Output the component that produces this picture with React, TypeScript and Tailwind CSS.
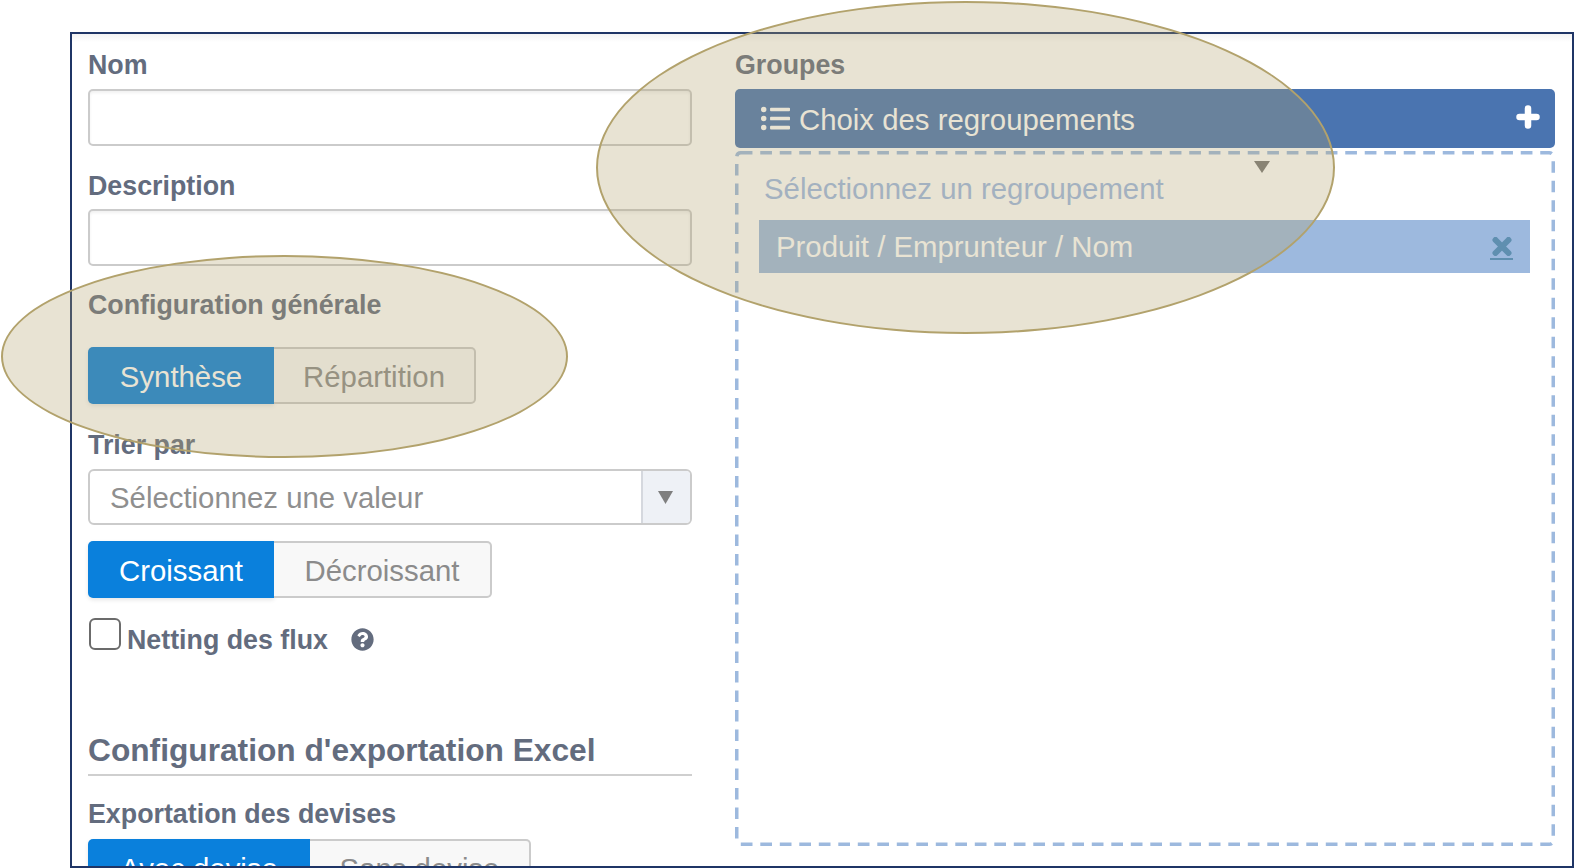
import React from 'react';
import { FaListUl, FaQuestionCircle } from 'react-icons/fa';

const FONT = "font-['Liberation_Sans',Arial,sans-serif]";

const Label: React.FC<{ className?: string; children: React.ReactNode }> = ({ className = '', children }) => (
  <div className={`h-[30px] text-[26.8px] leading-[32px] font-bold text-[#636c7e] ${className}`}>{children}</div>
);

const TextInput: React.FC<{ className?: string }> = ({ className = '' }) => (
  <div className={`h-[57px] w-full rounded-[5px] border-2 border-[#cbcbcb] bg-white shadow-[inset_0_2px_3px_rgba(0,0,0,0.06)] ${className}`} />
);

const Toggle: React.FC<{ left: string; right: string; leftW: string; rightW: string; className?: string }> = ({
  left,
  right,
  leftW,
  rightW,
  className = '',
}) => (
  <div className={`flex h-[57px] text-[29.35px] leading-[59px] ${className}`}>
    <div className={`${leftW} rounded-l-[5px] bg-[#0a80dc] text-center text-white shadow-[0_2px_4px_rgba(0,0,0,0.1)]`}>{left}</div>
    <div className={`${rightW} rounded-r-[5px] border-2 border-l-0 border-[#cbcbcb] bg-[#f8f8f8] text-center leading-[55px] text-[#8b8b8b]`}>
      {right}
    </div>
  </div>
);

export default function App() {
  return (
    <div className={`relative h-[868px] w-[1575px] overflow-hidden bg-white pt-[32px] pl-[70px] pr-[1px] ${FONT}`}>
      {/* Frame */}
      <div className="h-[836px] overflow-hidden border-2 border-[#1f3566]">
        <div className="h-[8px] bg-gradient-to-b from-[#f3f3f3] to-white" />
        <div className="flex gap-[43px] pt-[7px] pl-[16px] pr-[17px]">
          {/* Left column */}
          <div className="w-[604px] shrink-0">
            <Label>Nom</Label>
            <TextInput className="mt-[10px]" />
            <Label className="mt-[24px]">Description</Label>
            <TextInput className="mt-[9px]" />
            <Label className="mt-[23px]">Configuration générale</Label>
            <Toggle className="mt-[28px]" left="Synthèse" right="Répartition" leftW="w-[186px]" rightW="w-[202px]" />
            <Label className="mt-[25px]">Trier par</Label>

            <div className="mt-[10px] flex h-[56px] overflow-hidden rounded-[6px] border-2 border-[#cbcbcb] bg-white">
              <div className="flex-1 pl-[20px] text-[29.35px] leading-[54px] text-[#8f8f8f]">Sélectionnez une valeur</div>
              <div className="flex w-[49px] items-center justify-center border-l-2 border-[#d5d8de] bg-[#eef1f6] pr-[3px]">
                <svg width="15" height="13" viewBox="0 0 15 13">
                  <path d="M0 0h15L7.5 13z" fill="#7f7f7f" />
                </svg>
              </div>
            </div>

            <Toggle className="mt-[16px]" left="Croissant" right="Décroissant" leftW="w-[186px]" rightW="w-[218px]" />

            <div className="mt-[20px] flex h-[31px] items-start">
              <div className="ml-[1px] h-[32px] w-[32px] rounded-[6px] border-2 border-[#6b6b6b] bg-white" />
              <span className="ml-[6px] mt-[7px] text-[26.8px] leading-[30px] font-bold text-[#636c7e]">Netting des flux</span>
              <FaQuestionCircle className="ml-[23px] mt-[10px] text-[23px] text-[#636c7e]" />
            </div>

            <div className="mt-[81px] h-[40px] text-[31.7px] leading-[40px] font-bold text-[#636c7e]">Configuration d'exportation Excel</div>
            <div className="mt-[4px] h-[2px] bg-[#cfcfcf]" />
            <Label className="mt-[22px]">Exportation des devises</Label>
            <Toggle className="mt-[11px]" left="Avec devise" right="Sans devise" leftW="w-[222px]" rightW="w-[221px]" />
          </div>

          {/* Right column */}
          <div className="min-w-0 flex-1">
            <Label>Groupes</Label>
            <div className="mt-[10px] flex h-[59px] items-center justify-between rounded-[5px] bg-[#4a74b0] pl-[26px] pr-[15px] text-[29.35px] text-white">
              <div className="flex items-center">
                <FaListUl className="mr-[9px] text-[29px]" />
                <span className="mt-[3px]">Choix des regroupements</span>
              </div>
              <svg className="mb-[3px]" width="24" height="24" viewBox="0 0 24 24">
                <path d="M12 3.5v17M3.5 12h17" stroke="#fff" strokeWidth="6.5" strokeLinecap="round" />
              </svg>
            </div>

            <div className="relative mt-[3px] h-[695px] pt-[23px] pl-[24px] pr-[25px]">
              {/* dashes are longer than a css dashed border gives */}
              <svg className="absolute top-0 left-0" width="820" height="695">
                <rect x="1.75" y="1.75" width="816.5" height="691.5" rx="4" fill="none" stroke="#9db9de" strokeWidth="3.5" strokeDasharray="11.7 7.8" />
              </svg>
              <svg className="absolute top-[10px] left-[519px]" width="16" height="12" viewBox="0 0 16 12">
                <path d="M0 0h16L8 12z" fill="#777777" />
              </svg>
              <div className="relative h-[30px] pl-[5px] text-[29.35px] leading-[30px] text-[#9db8e4]">Sélectionnez un regroupement</div>
              <div className="relative mt-[16px] flex h-[53px] items-center justify-between bg-[#9db9de] pl-[17px] pr-[17px] text-[29.35px] text-white">
                <span className="pt-[2px]">Produit / Emprunteur / Nom</span>
                <span className="mb-[4px] flex h-[30px] w-[23px] items-start justify-center border-b-[2px] border-[#5f8fb0] pt-[7px]">
                  <svg width="20" height="19" viewBox="0 0 20 19">
                    <path d="M3.5 3l13 13M16.5 3l-13 13" stroke="#5f8fb0" strokeWidth="6" strokeLinecap="round" />
                  </svg>
                </span>
              </div>
            </div>
          </div>
        </div>
      </div>

      {/* Annotation ellipses */}
      <div className="pointer-events-none absolute top-[255px] left-[1px] h-[203px] w-[567px] rounded-[50%] border-2 border-[#b2a26c] bg-[#b2a26c]/30" />
      <div className="pointer-events-none absolute top-[1px] left-[596px] h-[333px] w-[739px] rounded-[50%] border-2 border-[#b2a26c] bg-[#b2a26c]/30" />
    </div>
  );
}
